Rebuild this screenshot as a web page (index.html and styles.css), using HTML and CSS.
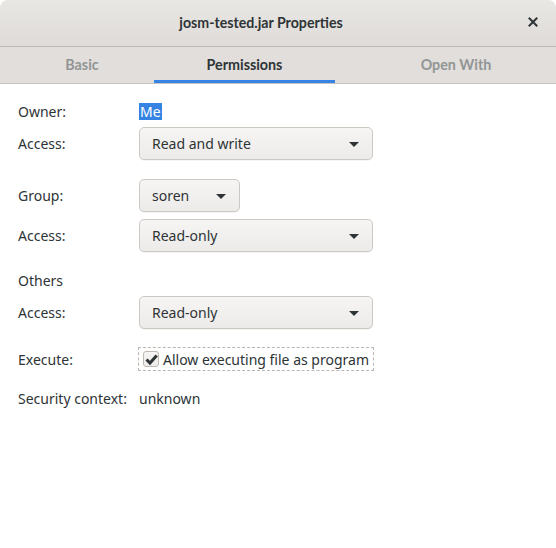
FILE: index.html
```html
<!DOCTYPE html>
<html>
<head>
<meta charset="utf-8">
<link rel="stylesheet" href="styles.css">
</head>
<body>
<div class="window">
  <header class="titlebar">
    <div class="title">josm-tested.jar Properties</div>
    <button class="close" aria-label="Close">
      <svg width="10" height="10" viewBox="0 0 10 10"><path d="M1.5 1.5 L8.5 8.5 M8.5 1.5 L1.5 8.5" stroke="#2e3436" stroke-width="2" stroke-linecap="square"/></svg>
    </button>
  </header>
  <nav class="tabs">
    <div class="tab tab-basic">Basic</div>
    <div class="tab tab-perm active">Permissions</div>
    <div class="tab tab-open">Open With</div>
  </nav>
  <main class="content">
    <div class="row row-owner"><span class="label">Owner:</span><span class="value"><span class="sel">Me</span></span></div>
    <div class="row row-combo"><span class="label">Access:</span><div class="combo wide"><span>Read and write</span><i class="arrow"></i></div></div>
    <div class="row row-combo gap-big"><span class="label">Group:</span><div class="combo narrow"><span>soren</span><i class="arrow"></i></div></div>
    <div class="row row-combo"><span class="label">Access:</span><div class="combo wide"><span>Read-only</span><i class="arrow"></i></div></div>
    <div class="row row-text gap-big2"><span class="label">Others</span></div>
    <div class="row row-combo"><span class="label">Access:</span><div class="combo wide"><span>Read-only</span><i class="arrow"></i></div></div>
    <div class="row row-check"><span class="label">Execute:</span><div class="check"><span class="box"><svg width="13" height="13" viewBox="0 0 12 12"><path d="M1.4 6 L4.6 9.2 L10.8 2.4" fill="none" stroke="#2e3436" stroke-width="2.8"/></svg></span><span>Allow executing file as program</span></div></div>
    <div class="row row-text row-sec"><span class="label">Security context:</span><span class="value">unknown</span></div>
  </main>
</div>
</body>
</html>
```
FILE: styles.css
```css
* { box-sizing: border-box; }
html, body { margin: 0; padding: 0; background: #ffffff; }
body {
  font-family: "Noto Sans", "Open Sans", sans-serif;
  font-size: 14px;
  color: #2e3436;
  width: 556px;
  height: 548px;
  overflow: hidden;
}
.window {
  width: 556px;
  height: 548px;
  background: #ffffff;
  border-radius: 8px 8px 0 0;
  overflow: hidden;
}
.titlebar {
  height: 47px;
  background: linear-gradient(#e9e7e4, #dedbd8);
  border-bottom: 1px solid #bfb8b1;
  display: flex;
  align-items: center;
  justify-content: center;
  padding-right: 34px;
  position: relative;
}
.title {
  font-family: "Lato", "Noto Sans", sans-serif;
  font-weight: bold;
  font-size: 14.2px;
  color: #2e3436;
  margin-top: -1px;
}
.close {
  position: absolute;
  right: 18px;
  top: 17px;
  width: 10px;
  height: 10px;
  padding: 0;
  border: 0;
  background: none;
  display: flex;
}
.tabs {
  height: 37px;
  background: #e1dedb;
  border-bottom: 1px solid #c7c2bd;
  display: flex;
  align-items: stretch;
}
.tab {
  display: flex;
  align-items: center;
  justify-content: center;
  font-family: "Lato", "Noto Sans", sans-serif;
  font-weight: bold;
  color: #929595;
  font-size: 14.3px;
  padding-bottom: 2px;
}
.tab-basic { margin-left: 10px; width: 144px; }
.tab-perm { width: 181px; }
.tab-open { margin-left: 42px; width: 158px; }
.tab.active {
  color: #2e3436;
  box-shadow: inset 0 -3px 0 #3584e4;
}
.content {
  padding: 0 0 0 18px;
  display: flex;
  flex-direction: column;
}
.row {
  display: flex;
  align-items: center;
}
.label {
  width: 121px;
  flex: none;
}
.row-owner { margin-top: 19px; height: 17px; }
.row-combo { margin-top: 7px; height: 33px; }
.gap-big { margin-top: 19px; }
.row-text { height: 17px; }
.gap-big2 { margin-top: 20px; }
.row-check { margin-top: 18px; height: 24px; }
.row-sec { margin-top: 19px; }
.sel {
  background: #3584e4;
  color: #ffffff;
  padding: 0 1px;
  line-height: 17px;
  display: inline-block;
}
.combo {
  height: 33px;
  border: 1px solid #cdc7c2;
  border-radius: 5px;
  background: linear-gradient(#f6f5f4, #edebe9);
  box-shadow: 0 1px rgba(0,0,0,0.04);
  display: flex;
  align-items: center;
  justify-content: space-between;
  padding: 0 13px 0 12px;
}
.combo.wide { width: 234px; }
.combo.narrow { width: 101px; }
.arrow {
  width: 0;
  height: 0;
  border-left: 5px solid transparent;
  border-right: 5px solid transparent;
  border-top: 5px solid #2e3436;
  margin-top: 1px;
}
.check {
  margin-left: -1px;
  height: 24px;
  width: 236px;
  border: 1px dashed #b9b6b2;
  display: flex;
  align-items: center;
  gap: 4px;
  padding-left: 4px;
}
.box {
  width: 16px;
  height: 16px;
  border: 1px solid #bfb8b1;
  border-radius: 3px;
  background: linear-gradient(#f6f5f4, #edebe9);
  display: flex;
  align-items: center;
  justify-content: center;
}
```
